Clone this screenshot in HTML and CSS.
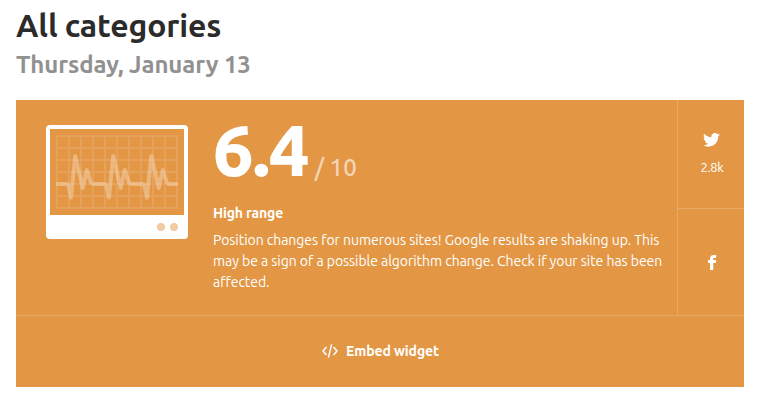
FILE: index.html
```html
<!DOCTYPE html>
<html lang="en">
<head>
    <meta charset="UTF-8">
    <meta name="viewport" content="width=device-width, initial-scale=1.0">
    <title>All categories</title>
    <link rel="stylesheet" href="styles.css">
</head>
<body>

    <header class="page-header">
        <h1>All categories</h1>
        <h2>Thursday, January 13</h2>
    </header>

    <div class="widget">
        <div class="widget-top">
            <div class="summary">
                <svg class="monitor" width="142" height="114" viewBox="0 0 142 114">
                    <rect width="142" height="114" rx="4" fill="#fff"/>
                    <rect x="4" y="4" width="134" height="86" fill="#e39745"/>
                    <!-- grid -->
                    <path d="M10 11H132M10 23H132M10 35H132M10 47H132M10 59H132M10 71H132M10 83H132M11 10V84M23 10V84M35 10V84M47 10V84M59 10V84M71 10V84M83 10V84M95 10V84M107 10V84M119 10V84M131 10V84" fill="none" stroke="#e6a25a" stroke-width="2"/>
                    <!-- pulse -->
                    <path d="M10 59H20Q22 59 22.600 61L25 72.500L29.200 31L36.700 63L40.800 45L44.500 56.500Q45.500 59 48 59H58Q60 59 60.600 61L63 72.500L67.200 31L74.700 63L78.800 45L82.500 56.500Q83.500 59 86 59H96Q98 59 98.600 61L101 72.500L105.200 31L112.700 63L116.800 45L120.500 56.500Q121.500 59 124 59H132" fill="none" stroke="#fff" stroke-opacity=".29" stroke-width="4" stroke-linejoin="round"/>
                    <circle cx="115" cy="102" r="4" fill="#f1cba2"/>
                    <circle cx="128" cy="102" r="4" fill="#f1cba2"/>
                </svg>

                <div class="info">
                    <div class="score">
                        <span class="score-value">6.4</span>
                        <span class="score-max">/ 10</span>
                    </div>
                    <div class="range">High range</div>
                    <p class="description">Position changes for numerous sites! Google results are shaking up. This may be a sign of a possible algorithm change. Check if your site has been affected.</p>
                </div>
            </div>

            <div class="share">
                <a class="share-item twitter">
                    <svg width="17" height="14" viewBox="0 0 24 20">
                        <path d="M24 2.370a9.800 9.800 0 0 1-2.830.780A4.940 4.940 0 0 0 23.340.420a9.900 9.900 0 0 1-3.130 1.200 4.920 4.920 0 0 0-8.380 4.480A13.980 13.980 0 0 1 1.670.950a4.920 4.920 0 0 0 1.520 6.570A4.900 4.900 0 0 1 .960 6.900c-.050 2.280 1.580 4.410 3.950 4.890a4.900 4.900 0 0 1-2.220.080 4.920 4.920 0 0 0 4.600 3.420A9.870 9.870 0 0 1 0 17.320 13.940 13.940 0 0 0 7.550 19.540c9.140 0 14.310-7.720 14-14.640A10 10 0 0 0 24 2.370z" fill="#fff"/>
                    </svg>
                    <span class="share-count">2.8k</span>
                </a>
                <a class="share-item facebook">
                    <svg width="9" height="16" viewBox="0 0 9 16">
                        <path d="M2 15V8H0V5H2V4C2 1.500 3.300 0 5.500 0H8.200V3H6.500C5.600 3 5.200 3.400 5.200 4.200V5H8.200L7.800 8H5.200V15Z" fill="#fff"/>
                    </svg>
                </a>
            </div>
        </div>

        <a class="embed">
            <svg width="16" height="14" viewBox="0 0 16 14">
                <path d="M4.500 3L1 7L4.500 11M11.500 3L15 7L11.500 11M9.600.400L6.400 13.600" fill="none" stroke="#fff" stroke-width="1.500"/>
            </svg>
            <span class="embed-label">Embed widget</span>
        </a>
    </div>

</body>
</html>
```
FILE: styles.css
```css
* {
    box-sizing: border-box;
}

body {
    font-family: Ubuntu, "Noto Sans", sans-serif;
    background: #fff;
    margin: 0;
    padding: 5px 14px 0 16px;
}

h1,
h2,
p {
    margin: 0;
}

h1 {
    font-size: 32px;
    line-height: 40px;
    font-weight: 580;
    color: #2b2b2b;
    letter-spacing: -0.15px;
}

h2 {
    font-size: 24px;
    line-height: 40px;
    font-weight: 600;
    color: #919191;
    letter-spacing: -0.1px;
}

.page-header {
    height: 95px;
}

.widget {
    width: 728px;
    height: 287px;
    background: #e39745;
    color: #fff;
}

.widget-top {
    display: flex;
    height: 216px;
    border-bottom: 1px solid #e8a967;
}

.summary {
    display: flex;
    flex: 1;
    padding: 25px 10px 0 30px;
}

.monitor {
    flex: none;
    margin-right: 25px;
}

.score {
    display: flex;
    align-items: baseline;
    height: 78px;
    line-height: 50px;
    white-space: nowrap;
}

.score-value {
    font-size: 72px;
    font-weight: 800;
    letter-spacing: -1.1px;
}

.score-max {
    margin-left: 6px;
    font-size: 24px;
    font-weight: 500;
    color: #f4d5b5;
}

.range {
    font-size: 14px;
    line-height: 21px;
    font-weight: 600;
    letter-spacing: -0.15px;
    margin-bottom: 6px;
}

.description {
    font-size: 14px;
    line-height: 21px;
    letter-spacing: -0.045px;
}

.share {
    width: 67px;
    border-left: 1px solid #e8a967;
}

.share-item {
    display: flex;
    flex-direction: column;
    align-items: center;
}

.twitter {
    height: 109px;
    padding-top: 33px;
    border-bottom: 1px solid #e8a967;
}

.share-count {
    margin-top: 11px;
    padding-left: 2px;
    font-size: 13px;
    line-height: 18px;
    letter-spacing: -0.4px;
}

.facebook {
    padding-top: 46px;
    padding-left: 2px;
}

.embed {
    display: flex;
    align-items: center;
    height: 70px;
    padding-left: 306px;
    font-size: 14px;
    font-weight: 600;
    letter-spacing: -0.1px;
}

.embed-label {
    margin-left: 8px;
}
```
